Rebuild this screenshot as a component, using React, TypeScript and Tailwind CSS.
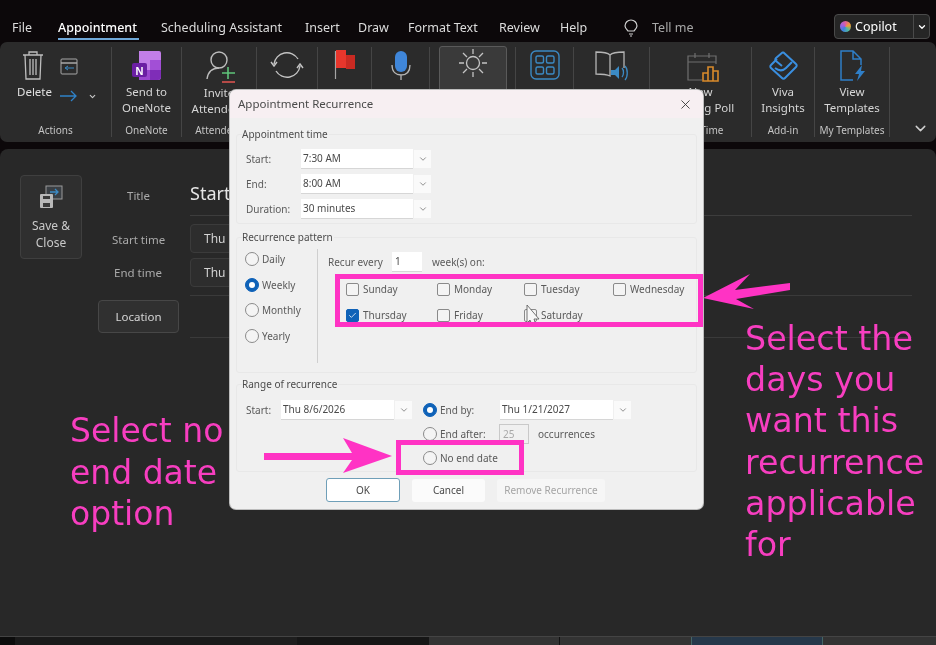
import type { ReactNode } from 'react'
import { ChevronDown, X, Check } from 'lucide-react'

const UI = "font-['Noto_Sans',sans-serif]"

function RibbonGroup({
  width,
  icon,
  lines,
  footer,
  className = '',
}: {
  width: string
  icon: ReactNode
  lines: string[]
  footer?: string
  className?: string
}) {
  return (
    <div className={`flex shrink-0 flex-col items-center border-r border-[#454545] ${width} ${className}`}>
      <div className="flex h-[37px] items-start justify-center pt-[3px]">{icon}</div>
      <div className="mt-[1px] flex h-[37px] flex-col items-center text-[11.5px] leading-[16px] text-[#d6d6d6] whitespace-nowrap">
        {lines.map((l) => (
          <span key={l}>{l}</span>
        ))}
      </div>
      <div className="mt-[4px] text-[10px] leading-[14px] text-[#c4c4c4] whitespace-nowrap">{footer}</div>
    </div>
  )
}

function TrashIcon() {
  return (
    <svg width="22" height="31" viewBox="0 0 22 31" fill="none" stroke="#bdbdbd" strokeWidth="1.3">
      <path d="M1 5h20M7 5V2h8v3M3 5l1 24h14l1-24M8 9v16M11 9v16M14 9v16" />
    </svg>
  )
}

function OneNoteIcon() {
  return (
    <svg width="31" height="31" viewBox="0 0 31 31">
      <path d="M8 1h20a2 2 0 0 1 2 2v24a3 3 0 0 1-3 3H8z" fill="#c27ee8" />
      <path d="M19 10h11v10H19z" fill="#a24fd6" />
      <path d="M19 20h11v7a3 3 0 0 1-3 3h-8z" fill="#7f2db8" />
      <path d="M8 20h11v10H8z" fill="#9a46cf" />
      <rect x="1" y="13" width="15" height="14" rx="2" fill="#6b1fa3" />
      <text x="8.5" y="24.5" textAnchor="middle" fontSize="11" fontWeight="700" fill="#fff" fontFamily="Liberation Sans, sans-serif">N</text>
    </svg>
  )
}

function InviteIcon() {
  return (
    <svg className="ml-[3px]" width="32" height="34" viewBox="0 0 32 34" fill="none">
      <circle cx="14" cy="10" r="8" stroke="#bdbdbd" strokeWidth="1.4" />
      <path d="M2 29c1-7 5-11 12-11" stroke="#bdbdbd" strokeWidth="1.4" />
      <path d="M23 17v12M17 23h13" stroke="#5fc47a" strokeWidth="1.6" />
      <path d="M17 32h13" stroke="#d9534f" strokeWidth="1.6" />
    </svg>
  )
}

function OptionsIcon() {
  return (
    <svg width="34" height="30" viewBox="0 0 34 30" fill="none" stroke="#c4c4c4" strokeWidth="1.4">
      <path d="M4 14A13 13 0 0 1 28 9" />
      <path d="M30 16A13 13 0 0 1 6 21" />
      <path d="M1 12l3 4 3-4M27 18l3-4 3 4" />
    </svg>
  )
}

function FlagIcon() {
  return (
    <svg width="22" height="30" viewBox="0 0 22 30">
      <path d="M1.5 1v28" stroke="#a5a5a5" strokeWidth="1.2" />
      <path d="M2 0h10v18H2z" fill="#e8362c" />
      <path d="M12 5h9v14h-9z" fill="#c92a22" />
    </svg>
  )
}

function MicIcon() {
  return (
    <svg width="20" height="31" viewBox="0 0 20 31" fill="none">
      <rect x="4" y="1" width="12" height="21" rx="6" fill="#3f86d9" />
      <path d="M1 15c0 7 4 10 9 10s9-3 9-10M10 25v5" stroke="#b5b5b5" strokeWidth="1.3" />
    </svg>
  )
}

function SunIcon() {
  return (
    <svg width="30" height="30" viewBox="0 0 30 30" fill="none" stroke="#c4c4c4" strokeWidth="1.3">
      <circle cx="15" cy="15" r="6.5" />
      <path d="M15 1v5M15 24v5M1 15h5M24 15h5M5 5l4 4M21 21l4 4M25 5l-4 4M9 21l-4 4" />
    </svg>
  )
}

function AppsIcon() {
  return (
    <svg width="30" height="30" viewBox="0 0 30 30" fill="none" stroke="#3b8ac4" strokeWidth="1.4">
      <rect x="1" y="1" width="28" height="28" rx="5" />
      <rect x="6" y="6" width="7.5" height="7" rx="1.5" />
      <rect x="16.5" y="6" width="7.5" height="7" rx="1.5" />
      <rect x="6" y="17" width="7.5" height="7" rx="1.5" />
      <rect x="16.5" y="17" width="7.5" height="7" rx="1.5" />
    </svg>
  )
}

function BookIcon() {
  return (
    <svg width="34" height="31" viewBox="0 0 34 31" fill="none">
      <path d="M15 5C12 2 6 2 1 2v22c5 0 10 0 14 2zM15 5c3-3 9-3 14-3v16" stroke="#b5b5b5" strokeWidth="1.3" />
      <path d="M16 20h4l4-4v13l-4-4h-4z" fill="#3b8ac4" />
      <path d="M27 18c2 2 2 7 0 9M30 16c3 3 3 11 0 14" stroke="#3b8ac4" strokeWidth="1.3" />
    </svg>
  )
}

function PollIcon() {
  return (
    <svg className="ml-[6px] mt-[2px]" width="33" height="30" viewBox="0 0 33 30" fill="none">
      <path d="M15 28H1V4h28v8M1 10h28M8 1v5M22 1v5" stroke="#6f6f6f" strokeWidth="1.2" />
      <path d="M16 29v-8h5v8zM21 29V15h5v14zM26 29v-10h5v10z" stroke="#d98a2b" strokeWidth="1.6" />
    </svg>
  )
}

function VivaIcon() {
  return (
    <svg width="31" height="31" viewBox="0 0 31 31" fill="none" stroke="#3a8fe0" strokeWidth="2" strokeLinejoin="round">
      <path d="M15 2l13 12a2 2 0 0 1 0 3L17 28a2 2 0 0 1-3 0L3 18a2 2 0 0 1 0-3l6-6" />
      <path d="M15 2L8 8a2 2 0 0 0 0 3l6 5" />
      <path d="M7 18c4 3 8 3 11 0l6-6" />
    </svg>
  )
}

function TemplatesIcon() {
  return (
    <svg className="ml-[2px]" width="26" height="32" viewBox="0 0 26 32" fill="none">
      <path d="M13 30H1V1h12l8 8v6M13 1v8h8" stroke="#2f7fc8" strokeWidth="1.5" />
      <path d="M22 15l-7 9h4l-2 7 8-10h-4z" fill="#2f7fc8" />
    </svg>
  )
}

function SaveIcon() {
  return (
    <svg width="24" height="24" viewBox="0 0 24 24" fill="none">
      <rect x="7" y="1" width="16" height="13" stroke="#9a9a9a" strokeWidth="1" fill="#3a3f44" />
      <path d="M11 7h8M16 4l3 3-3 3" stroke="#3b8ac4" strokeWidth="1.3" />
      <rect x="1" y="9" width="13" height="14" rx="1" fill="#b9b9b9" />
      <rect x="4" y="11" width="7" height="3" fill="#3a3a3a" />
      <rect x="4" y="18" width="7" height="4" fill="#3a3a3a" />
    </svg>
  )
}

function DateField({ children }: { children: ReactNode }) {
  return (
    <div className="flex h-[29px] w-[200px] items-center rounded-[4px] border border-[#3b3b3b] bg-[#2d2d2d] px-[13px] text-[12px] text-[#d4d4d4]">
      {children}
    </div>
  )
}

function Group({ title, className, children }: { title: string; className: string; children: ReactNode }) {
  return (
    <div className={`relative mx-[6px] rounded-[3px] border border-[#e8e8e8] ${className}`}>
      <span className="absolute left-[5px] top-[-8px] bg-[#f0f0f0] pr-[1px] text-[10px] leading-[14px] text-[#4c4c4c]">{title}</span>
      {children}
    </div>
  )
}

function Combo({ value, width }: { value: string; width: string }) {
  return (
    <div className="flex items-center gap-[1px]">
      <div className={`flex h-[20px] items-center border-b border-[#d6d6d6] bg-white pl-[2px] text-[10px] text-[#4a4a4a] ${width}`}>
        {value}
      </div>
      <div className="flex h-[18px] w-[17px] items-center justify-center bg-[#fafafa]">
        <ChevronDown size={10} className="text-[#7b7b7b]" />
      </div>
    </div>
  )
}

function Radio({ label, checked = false }: { label: string; checked?: boolean }) {
  return (
    <div className="flex items-center gap-[3px] text-[10px] leading-[14px] text-[#5a5a5a]">
      <span
        className={`flex h-[14px] w-[14px] shrink-0 items-center justify-center rounded-full border ${
          checked ? 'border-[#0f62b8] bg-[#0f62b8]' : 'border-[#8a8a8a] bg-[#f4f4f4]'
        }`}
      >
        {checked && <span className="h-[6px] w-[6px] rounded-full bg-white" />}
      </span>
      {label}
    </div>
  )
}

function Day({ label, checked = false, width }: { label: string; checked?: boolean; width: string }) {
  return (
    <div className={`flex items-center gap-[4px] text-[10px] leading-[14px] text-[#5a5a5a] ${width}`}>
      <span
        className={`flex h-[13px] w-[13px] shrink-0 items-center justify-center rounded-[2px] border ${
          checked ? 'border-[#0f62b8] bg-[#0f62b8]' : 'border-[#8a8a8a] bg-[#f4f4f4]'
        }`}
      >
        {checked && <Check size={9} strokeWidth={2} className="text-white" />}
      </span>
      {label}
    </div>
  )
}

function RecurrenceDialog() {
  return (
    <div className="absolute left-[230px] top-[90px] flex h-[419px] w-[473px] flex-col overflow-hidden rounded-[6px] bg-[#f0f0f0] shadow-[0_0_0_1px_#bdbdbd]">
      <div className="flex h-[28px] shrink-0 items-center justify-between bg-[#f7eff2] pl-[8px] pr-[10px] text-[11.5px] text-[#4a4a4a]">
        <span>Appointment Recurrence</span>
        <X size={15} strokeWidth={1.4} className="text-[#333]" />
      </div>

      <Group title="Appointment time" className="mt-[16px] flex h-[90px] flex-col gap-[5px] pl-[64px] pt-[14px]">
        {[
          ['Start:', '7:30 AM'],
          ['End:', '8:00 AM'],
          ['Duration:', '30 minutes'],
        ].map(([label, value]) => (
          <div key={label} className="relative flex items-center">
            <span className="absolute left-[-55px] text-[10px] text-[#5a5a5a]">{label}</span>
            <Combo value={value} width="w-[112px]" />
          </div>
        ))}
      </Group>

      <Group title="Recurrence pattern" className="mt-[13px] flex h-[136px] pt-[11px]">
        <div className="flex h-[114px] w-[81px] shrink-0 flex-col gap-[11.5px] border-r border-[#cfcfcf] pl-[8px] pt-[3px]">
          <Radio label="Daily" />
          <Radio label="Weekly" checked />
          <Radio label="Monthly" />
          <Radio label="Yearly" />
        </div>
        <div className="pl-[10px] pt-[3px]">
          <div className="flex h-[20px] items-center text-[10px] text-[#5a5a5a]">
            <span className="w-[64px]">Recur every</span>
            <span className="flex h-[20px] w-[30px] items-center border-b border-[#d6d6d6] bg-white pl-[3px] text-[#4a4a4a]">1</span>
            <span className="ml-[10px]">week(s) on:</span>
          </div>
          <div className="mt-[10px] flex w-[370px] flex-wrap gap-y-[12px] pl-[18px]">
            <Day label="Sunday" width="w-[91px]" />
            <Day label="Monday" width="w-[87px]" />
            <Day label="Tuesday" width="w-[89px]" />
            <Day label="Wednesday" width="w-[80px]" />
            <Day label="Thursday" checked width="w-[91px]" />
            <Day label="Friday" width="w-[87px]" />
            <Day label="Saturday" width="w-[89px]" />
          </div>
        </div>
      </Group>

      <Group title="Range of recurrence" className="mt-[11px] flex h-[88px] pt-[15px]">
        <span className="ml-[9px] mt-[3px] w-[35px] text-[10px] text-[#5a5a5a]">Start:</span>
        <div>
          <Combo value="Thu 8/6/2026" width="w-[113px]" />
        </div>
        <div className="ml-[11px] flex flex-col">
          <div className="flex items-center">
            <span className="w-[77px]">
              <Radio label="End by:" checked />
            </span>
            <Combo value="Thu 1/21/2027" width="w-[113px]" />
          </div>
          <div className="mt-[4px] flex items-center">
            <span className="w-[76px]">
              <Radio label="End after:" />
            </span>
            <span className="flex h-[20px] w-[30px] items-center border border-[#c9c9c9] pl-[3px] text-[10px] text-[#a8a8a8]">25</span>
            <span className="ml-[9px] text-[10px] text-[#5a5a5a]">occurrences</span>
          </div>
          <div className="mt-[7px]">
            <Radio label="No end date" />
          </div>
        </div>
      </Group>

      <div className="mt-[6px] flex items-center pl-[96px] text-[10px]">
        <button className="h-[24px] w-[74px] rounded-[3px] border border-[#6f9fb8] bg-white text-[#4a4a4a]">OK</button>
        <button className="ml-[12px] h-[23px] w-[73px] rounded-[3px] bg-[#fbfbfb] text-[#4a4a4a]">Cancel</button>
        <button className="ml-[12px] h-[23px] w-[108px] rounded-[3px] bg-[#f6f6f6] text-[#a5a5a5]">Remove Recurrence</button>
      </div>
    </div>
  )
}

function Annotations() {
  return (
    <>
      {/* mouse pointer */}
      <svg className="absolute left-[526px] top-[304px]" width="15" height="22" viewBox="0 0 15 22">
        <path d="M1 1L13 15H8L10 21H6L4 16L1 19Z" fill="#f7f7f7" stroke="#555" strokeWidth="0.8" />
      </svg>

      {/* pink highlight boxes */}
      <div className="absolute left-[335px] top-[274px] h-[53px] w-[368px] border-[5px] border-[#ff33c4]" />
      <div className="absolute left-[396px] top-[440px] h-[35px] w-[128px] border-[5px] border-[#ff33c4]" />

      {/* pink arrows */}
      <svg className="absolute left-[700px] top-[270px]" width="95" height="45" viewBox="0 0 95 45">
        <path d="M3 28L50 4L35 20L90 13L90 20L36 29L54 39Z" fill="#ff33c4" />
      </svg>
      <svg className="absolute left-[260px] top-[436px]" width="135" height="40" viewBox="0 0 135 40">
        <path d="M4 17L92 17L83 2L132 20L83 37L92 24L4 24Z" fill="#ff33c4" />
      </svg>

      <div className="absolute left-[70px] top-[410px] font-['DejaVu_Sans',sans-serif] text-[33px] leading-[41.5px] text-[#f73ec0]">
        Select no
        <br />
        end date
        <br />
        option
      </div>
      <div className="absolute left-[745px] top-[318px] font-['DejaVu_Sans',sans-serif] text-[33.3px] leading-[41.2px] text-[#f73ec0]">
        Select the
        <br />
        days you
        <br />
        want this
        <br />
        recurrence
        <br />
        applicable
        <br />
        for
      </div>
    </>
  )
}

export default function App() {
  return (
    <div className={`relative flex h-[645px] w-[936px] flex-col overflow-hidden bg-[#0c080a] blur-[0.5px] ${UI}`}>
      {/* tab strip */}
      <div className="flex h-[42px] shrink-0 items-end pb-[5px] pl-[12px] text-[12.5px] leading-[18px] text-[#dcdcdc]">
        <span className="w-[46px]">File</span>
        <span className="relative mr-[22px] w-[81px] font-medium text-white">
          Appointment
          <span className="absolute bottom-[-3px] left-0 right-0 h-[2px] bg-[#6fa8d8]" />
        </span>
        <span className="w-[144px]">Scheduling Assistant</span>
        <span className="w-[53px]">Insert</span>
        <span className="w-[50px]">Draw</span>
        <span className="w-[91px]">Format Text</span>
        <span className="w-[61px]">Review</span>
        <span className="w-[64px]">Help</span>
        <svg width="14" height="18" viewBox="0 0 14 18" fill="none" stroke="#d0d0d0" strokeWidth="1.2">
          <path d="M4 12C2 10 1 8.500 1 7a6 6 0 0 1 12 0c0 1.500-1 3-3 5zM5 15h4M6 17h2" />
        </svg>
        <span className="ml-[14px] text-[#a8a8a8]">Tell me</span>
        <div className="mb-[-2px] ml-auto mr-[6px] flex h-[25px] w-[96px] items-center rounded-[4px] border border-[#4a4a4a] bg-[#262626] text-white">
          <span className="ml-[5px] h-[11px] w-[11px] rounded-full bg-[conic-gradient(#e0609a,#f0a030,#50b8a0,#4080e0,#a060e0,#e0609a)]" />
          <span className="ml-[4px] w-[58px]">Copilot</span>
          <span className="flex h-full flex-1 items-center justify-center border-l border-[#4a4a4a]">
            <ChevronDown size={10} strokeWidth={3} />
          </span>
        </div>
      </div>

      {/* ribbon */}
      <div className="mb-[7px] flex h-[100px] shrink-0 rounded-[7px] bg-[#2b2b2b] py-[5px]">
        <div className="flex w-[112px] shrink-0 flex-col border-r border-[#454545]">
          <div className="flex h-[37px] items-start pl-[22px] pt-[3px]">
            <TrashIcon />
            <svg className="ml-[16px] mt-[7px]" width="18" height="18" viewBox="0 0 18 18" fill="none">
              <rect x="1" y="2" width="16" height="15" rx="1" stroke="#a8a8a8" />
              <path d="M1 6h16" stroke="#a8a8a8" strokeWidth="1.500" />
              <path d="M14 11H6M8 9l-3 2 3 2" stroke="#3b8ac4" />
            </svg>
          </div>
          <div className="mt-[1px] flex h-[37px] items-start pl-[17px] text-[11.5px] leading-[16px] text-[#e0e0e0]">
            <span className="w-[43px]">Delete</span>
            <svg className="mt-[6px]" width="17" height="12" viewBox="0 0 17 12" fill="none" stroke="#2f82c8" strokeWidth="1.300">
              <path d="M0 6h16M11 1l5 5-5 5" />
            </svg>
            <ChevronDown size={9} strokeWidth={3} className="ml-[11px] mt-[8px] text-[#c9c9c9]" />
          </div>
          <div className="mt-[4px] text-center text-[10px] leading-[14px] text-[#c4c4c4]">Actions</div>
        </div>
        <RibbonGroup width="w-[70px]" icon={<OneNoteIcon />} lines={['Send to', 'OneNote']} footer="OneNote" />
        <RibbonGroup width="w-[75px]" icon={<InviteIcon />} lines={['Invite', 'Attendees']} footer="Attendees" />
        <RibbonGroup width="w-[61px]" icon={<OptionsIcon />} lines={['Options']} />
        <RibbonGroup width="w-[54px]" icon={<FlagIcon />} lines={['Tags']} />
        <RibbonGroup width="w-[58px]" icon={<MicIcon />} lines={['Dictate']} />
        <div className="flex w-[86px] shrink-0 justify-center border-r border-[#454545]">
          <div className="mt-[-1px] flex h-[60px] w-[68px] flex-col items-center rounded-[3px] border border-[#5a5a5a] bg-[#3a3a3a] pt-[1px] text-[11.5px] leading-[16px] text-[#d6d6d6]">
            <SunIcon />
            <span className="mt-[8px]">Switch</span>
          </div>
        </div>
        <RibbonGroup width="w-[58px]" icon={<AppsIcon />} lines={['All']} />
        <RibbonGroup width="w-[76px]" icon={<BookIcon />} lines={['Learning']} />
        <RibbonGroup width="w-[102px]" icon={<PollIcon />} lines={['New', 'Meeting Poll']} footer="Find Time" />
        <RibbonGroup width="w-[63px]" icon={<VivaIcon />} lines={['Viva', 'Insights']} footer="Add-in" />
        <RibbonGroup width="w-[75px]" icon={<TemplatesIcon />} lines={['View', 'Templates']} footer="My Templates" />
        <div className="flex flex-1 items-end justify-center pl-[14px]">
          <ChevronDown size={17} className="text-[#d0d0d0]" />
        </div>
      </div>

      {/* appointment form */}
      <div className="flex h-[487px] shrink-0 rounded-t-[8px] bg-[#282828] pl-[20px] pt-[26px]">
        <div className="flex h-[84px] w-[62px] shrink-0 flex-col items-center rounded-[4px] border border-[#3f3f3f] bg-[#2f2f2f] pt-[9px] text-[12px] leading-[17px] text-[#c9c9c9]">
          <SaveIcon />
          <span className="mt-[8px]">Save &amp;</span>
          <span>Close</span>
        </div>
        <div className="ml-[16px] flex w-[92px] shrink-0 flex-col text-[11.5px] text-[#aaaaaa]">
          <span className="mt-[13px] h-[44px] pl-[29px] leading-[16px]">Title</span>
          <span className="h-[33px] pl-[14px] leading-[16px]">Start time</span>
          <span className="h-[35px] pl-[16px] leading-[16px]">End time</span>
          <span className="flex h-[33px] w-[81px] items-center justify-center rounded-[4px] border border-[#474747] bg-[#303030] text-[#d6d6d6]">
            Location
          </span>
        </div>
        <div className="w-[722px] shrink-0">
          <div className="flex h-[41px] items-start border-b border-[#3d3d3d] pt-[4px] text-[18px] leading-[28px] text-[#e6e6e6]">Start</div>
          <div className="mt-[8px] flex flex-col gap-[5px]">
            <DateField>Thu 8/6/2026</DateField>
            <DateField>Thu 8/6/2026</DateField>
          </div>
          <div className="mt-[8px] h-[43px] border-b border-t border-[#3a3a3a]" />
        </div>
      </div>

      {/* taskbar sliver */}
      <div className="flex h-[9px] shrink-0 border-t border-[#444] bg-[#1a1a1a]">
        <div className="h-full w-[15px] bg-[#0c0c0c]" />
        <div className="h-full w-[235px]" />
        <div className="h-full w-[47px] bg-[#1e1e1e]" />
        <div className="h-full w-[132px] bg-[#161616]" />
        <div className="h-full w-[130px] bg-[#333]" />
        <div className="h-full w-[132px] border-l border-[#111] bg-[#333]" />
        <div className="h-full w-[132px] border-x border-[#466] bg-[#26384a]" />
        <div className="h-full flex-1 bg-[#333]" />
      </div>

      <RecurrenceDialog />
      <Annotations />
    </div>
  )
}
